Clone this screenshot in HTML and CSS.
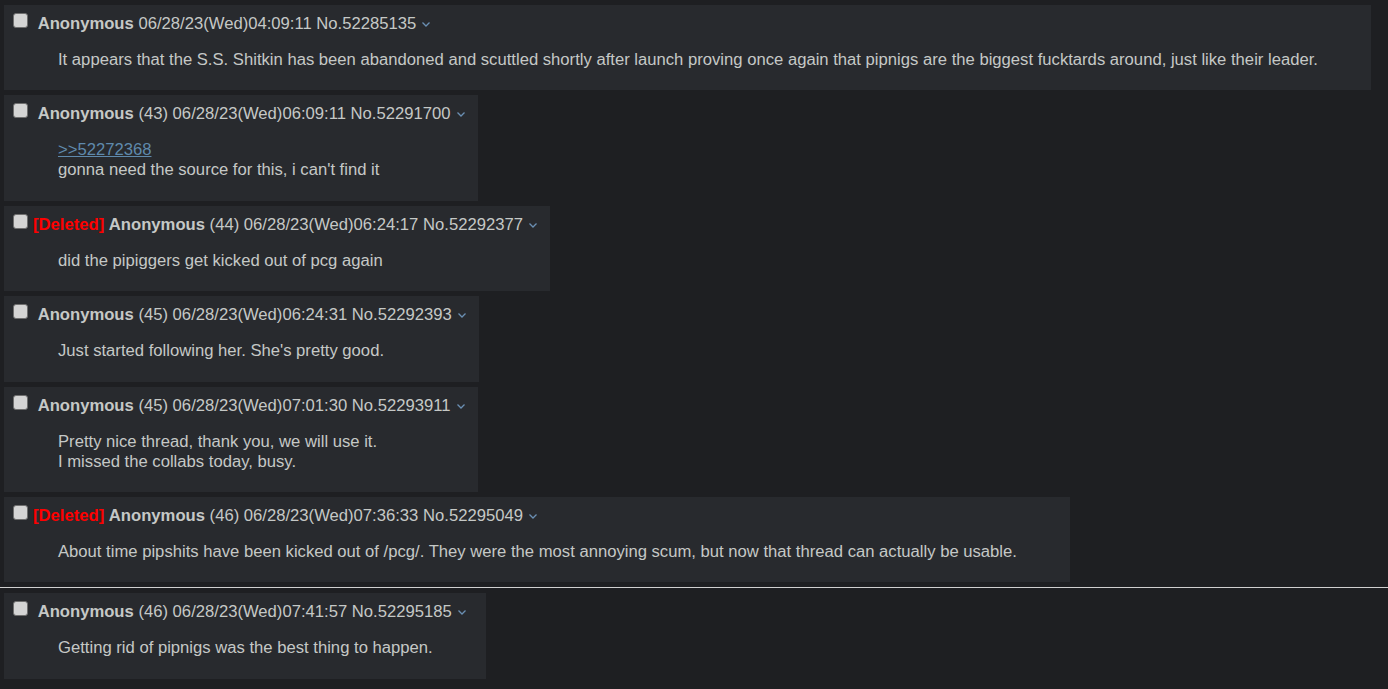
FILE: index.html
```html
<!doctype html>
<html>
<head>
<meta charset="utf-8">
<title>thread</title>
<link rel="stylesheet" href="styles.css">
</head>
<body>
<div class="thread">
	<div class="post">
		<div class="post-info"><span class="cb"></span> <b class="name">Anonymous</b> 06/28/23(Wed)04:09:11 No.52285135<svg class="menu" width="8" height="5" viewBox="0 0 8 5"><path d="M0.5 0.5 L4 4 L7.5 0.5" fill="none" stroke="#6a8fb3" stroke-width="1.3"/></svg></div>
		<blockquote class="msg">It appears that the S.S. Shitkin has been abandoned and scuttled shortly after launch proving once again that pipnigs are the biggest fucktards around, just like their leader.</blockquote>
	</div>
	<div class="post">
		<div class="post-info"><span class="cb"></span> <b class="name">Anonymous</b> (43) 06/28/23(Wed)06:09:11 No.52291700<svg class="menu" width="8" height="5" viewBox="0 0 8 5"><path d="M0.5 0.5 L4 4 L7.5 0.5" fill="none" stroke="#6a8fb3" stroke-width="1.3"/></svg></div>
		<blockquote class="msg"><a class="quotelink" href="#p52272368">&gt;&gt;52272368</a><br>gonna need the source for this, i can't find it</blockquote>
	</div>
	<div class="post">
		<div class="post-info"><span class="cb"></span><b class="deleted">[Deleted]</b> <b class="name">Anonymous</b> (44) 06/28/23(Wed)06:24:17 No.52292377<svg class="menu" width="8" height="5" viewBox="0 0 8 5"><path d="M0.5 0.5 L4 4 L7.5 0.5" fill="none" stroke="#6a8fb3" stroke-width="1.3"/></svg></div>
		<blockquote class="msg">did the pipiggers get kicked out of pcg again</blockquote>
	</div>
	<div class="post">
		<div class="post-info"><span class="cb"></span> <b class="name">Anonymous</b> (45) 06/28/23(Wed)06:24:31 No.52292393<svg class="menu" width="8" height="5" viewBox="0 0 8 5"><path d="M0.5 0.5 L4 4 L7.5 0.5" fill="none" stroke="#6a8fb3" stroke-width="1.3"/></svg></div>
		<blockquote class="msg">Just started following her. She's pretty good.</blockquote>
	</div>
	<div class="post">
		<div class="post-info"><span class="cb"></span> <b class="name">Anonymous</b> (45) 06/28/23(Wed)07:01:30 No.52293911<svg class="menu" width="8" height="5" viewBox="0 0 8 5"><path d="M0.5 0.5 L4 4 L7.5 0.5" fill="none" stroke="#6a8fb3" stroke-width="1.3"/></svg></div>
		<blockquote class="msg">Pretty nice thread, thank you, we will use it.<br>I missed the collabs today, busy.</blockquote>
	</div>
	<div class="post">
		<div class="post-info"><span class="cb"></span><b class="deleted">[Deleted]</b> <b class="name">Anonymous</b> (46) 06/28/23(Wed)07:36:33 No.52295049<svg class="menu" width="8" height="5" viewBox="0 0 8 5"><path d="M0.5 0.5 L4 4 L7.5 0.5" fill="none" stroke="#6a8fb3" stroke-width="1.3"/></svg></div>
		<blockquote class="msg">About time pipshits have been kicked out of /pcg/. They were the most annoying scum, but now that thread can actually be usable.</blockquote>
	</div>
	<hr class="unread">
	<div class="post">
		<div class="post-info"><span class="cb"></span> <b class="name">Anonymous</b> (46) 06/28/23(Wed)07:41:57 No.52295185<svg class="menu" width="8" height="5" viewBox="0 0 8 5"><path d="M0.5 0.5 L4 4 L7.5 0.5" fill="none" stroke="#6a8fb3" stroke-width="1.3"/></svg></div>
		<blockquote class="msg">Getting rid of pipnigs was the best thing to happen.</blockquote>
	</div>
</div>
</body>
</html>
```

FILE: styles.css
```css
*{ margin:0; padding:0; box-sizing:border-box;}
body{ background:#1e1f22; color:#c5c8c6; font-family:"Liberation Sans", Arial, sans-serif; font-size:16.65px; line-height:20px;}
.thread{ display:flex; flex-direction:column; align-items:flex-start; gap:5px; padding:5px 0 0 4px;}
.post{ background:#282a2e; padding:9px 13px 4.4px 5px;}
.post-info{ white-space:nowrap; height:20px;}
.cb{ display:inline-block; width:15px; height:15px; margin:-1px 5px 0 4px; vertical-align:top; background:#d4d4d4; border:1px solid #6e6e6e; border-radius:3px;}
.name{ color:#c5c8c6; font-weight:bold;}
.deleted{ color:#f00; font-weight:bold;}
.menu{ margin-left:6px; vertical-align:2px;}
.msg{ margin:16px 40px 16px 49px; white-space:nowrap;}
.quotelink{ color:#5f89ac;}
.unread{ align-self:stretch; margin:0 0 0 -4px; border:0; border-top:1px solid #d0d0d0; height:1px; background:#55575a;}
```
